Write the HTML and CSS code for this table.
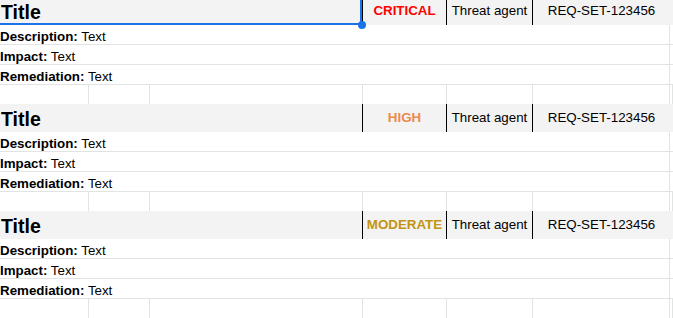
FILE: index.html
```html
<!DOCTYPE html>
<html lang="en">
<head>
<meta charset="utf-8">
<title>Findings</title>
<link rel="stylesheet" href="styles.css">
</head>
<body>
<div class="sheet">
  <section class="block">
    <div class="grid title-row">
      <div class="c-title">Title<span class="sel"></span><span class="handle"></span></div>
      <div class="c-sev critical">CRITICAL</div>
      <div class="c-agent">Threat agent</div>
      <div class="c-req">REQ-SET-123456</div>
      <div class="c-rest"></div>
    </div>
    <div class="grid data-row"><div class="c-text"><b>Description:</b> Text</div><div class="c-g"></div></div>
    <div class="grid data-row"><div class="c-text"><b>Impact:</b> Text</div><div class="c-g"></div></div>
    <div class="grid data-row"><div class="c-text"><b>Remediation:</b> Text</div><div class="c-g"></div></div>
    <div class="grid empty-row"><div></div><div></div><div></div><div></div><div></div><div></div><div></div></div>
  </section>
  <section class="block">
    <div class="grid title-row">
      <div class="c-title">Title</div>
      <div class="c-sev high">HIGH</div>
      <div class="c-agent">Threat agent</div>
      <div class="c-req">REQ-SET-123456</div>
      <div class="c-rest"></div>
    </div>
    <div class="grid data-row"><div class="c-text"><b>Description:</b> Text</div><div class="c-g"></div></div>
    <div class="grid data-row"><div class="c-text"><b>Impact:</b> Text</div><div class="c-g"></div></div>
    <div class="grid data-row"><div class="c-text"><b>Remediation:</b> Text</div><div class="c-g"></div></div>
    <div class="grid empty-row"><div></div><div></div><div></div><div></div><div></div><div></div><div></div></div>
  </section>
  <section class="block">
    <div class="grid title-row">
      <div class="c-title">Title</div>
      <div class="c-sev moderate">MODERATE</div>
      <div class="c-agent">Threat agent</div>
      <div class="c-req">REQ-SET-123456</div>
      <div class="c-rest"></div>
    </div>
    <div class="grid data-row"><div class="c-text"><b>Description:</b> Text</div><div class="c-g"></div></div>
    <div class="grid data-row"><div class="c-text"><b>Impact:</b> Text</div><div class="c-g"></div></div>
    <div class="grid data-row"><div class="c-text"><b>Remediation:</b> Text</div><div class="c-g"></div></div>
    <div class="grid empty-row"><div></div><div></div><div></div><div></div><div></div><div></div><div></div></div>
  </section>
</div>
</body>
</html>
```
FILE: styles.css
```css
* { box-sizing: border-box; }
html, body {
  margin: 0;
  padding: 0;
  background: #ffffff;
  overflow: hidden;
}
body {
  font-family: "Liberation Sans", Arial, sans-serif;
  font-size: 13.33px;
  color: #000;
  width: 673px;
  height: 318px;
}
.sheet {
  margin-top: -3px;
}
.grid {
  display: grid;
  grid-template-columns: 89px 61px 213px 84px 86px 137px 1fr;
}
.title-row {
  height: 28px;
  background: #f3f3f3;
}
.c-title {
  grid-column: 1 / 4;
  position: relative;
  font-weight: bold;
  font-size: 19.5px;
  line-height: 26px;
  padding: 2px 0 0 1px;
  border-right: 1px solid #000;
  white-space: nowrap;
}
.c-sev, .c-agent, .c-req {
  line-height: 28px;
  text-align: center;
  white-space: nowrap;
}
.c-sev {
  font-weight: bold;
  border-right: 1px solid #000;
}
.c-agent {
  border-right: 1px solid #000;
}
.critical { color: #ff0000; }
.high { color: #ec8a4c; }
.moderate { color: #c39312; }
.sel {
  position: absolute;
  left: -2px;
  top: -2px;
  right: 0;
  bottom: 0;
  border: 2px solid #1a73e8;
  z-index: 2;
}
.handle {
  position: absolute;
  right: -4px;
  bottom: -4px;
  width: 8px;
  height: 8px;
  border-radius: 50%;
  background: #1a73e8;
  z-index: 3;
}
.data-row {
  height: 20px;
}
.c-text {
  grid-column: 1 / 7;
  border-right: 1px solid #e2e3e3;
  border-bottom: 1px solid #e2e3e3;
  line-height: 15px;
  padding-top: 4px;
  white-space: nowrap;
}
.c-g {
  border-bottom: 1px solid #e2e3e3;
}
.empty-row {
  height: 19px;
}
.empty-row > div {
  border-right: 1px solid #e2e3e3;
}
```
